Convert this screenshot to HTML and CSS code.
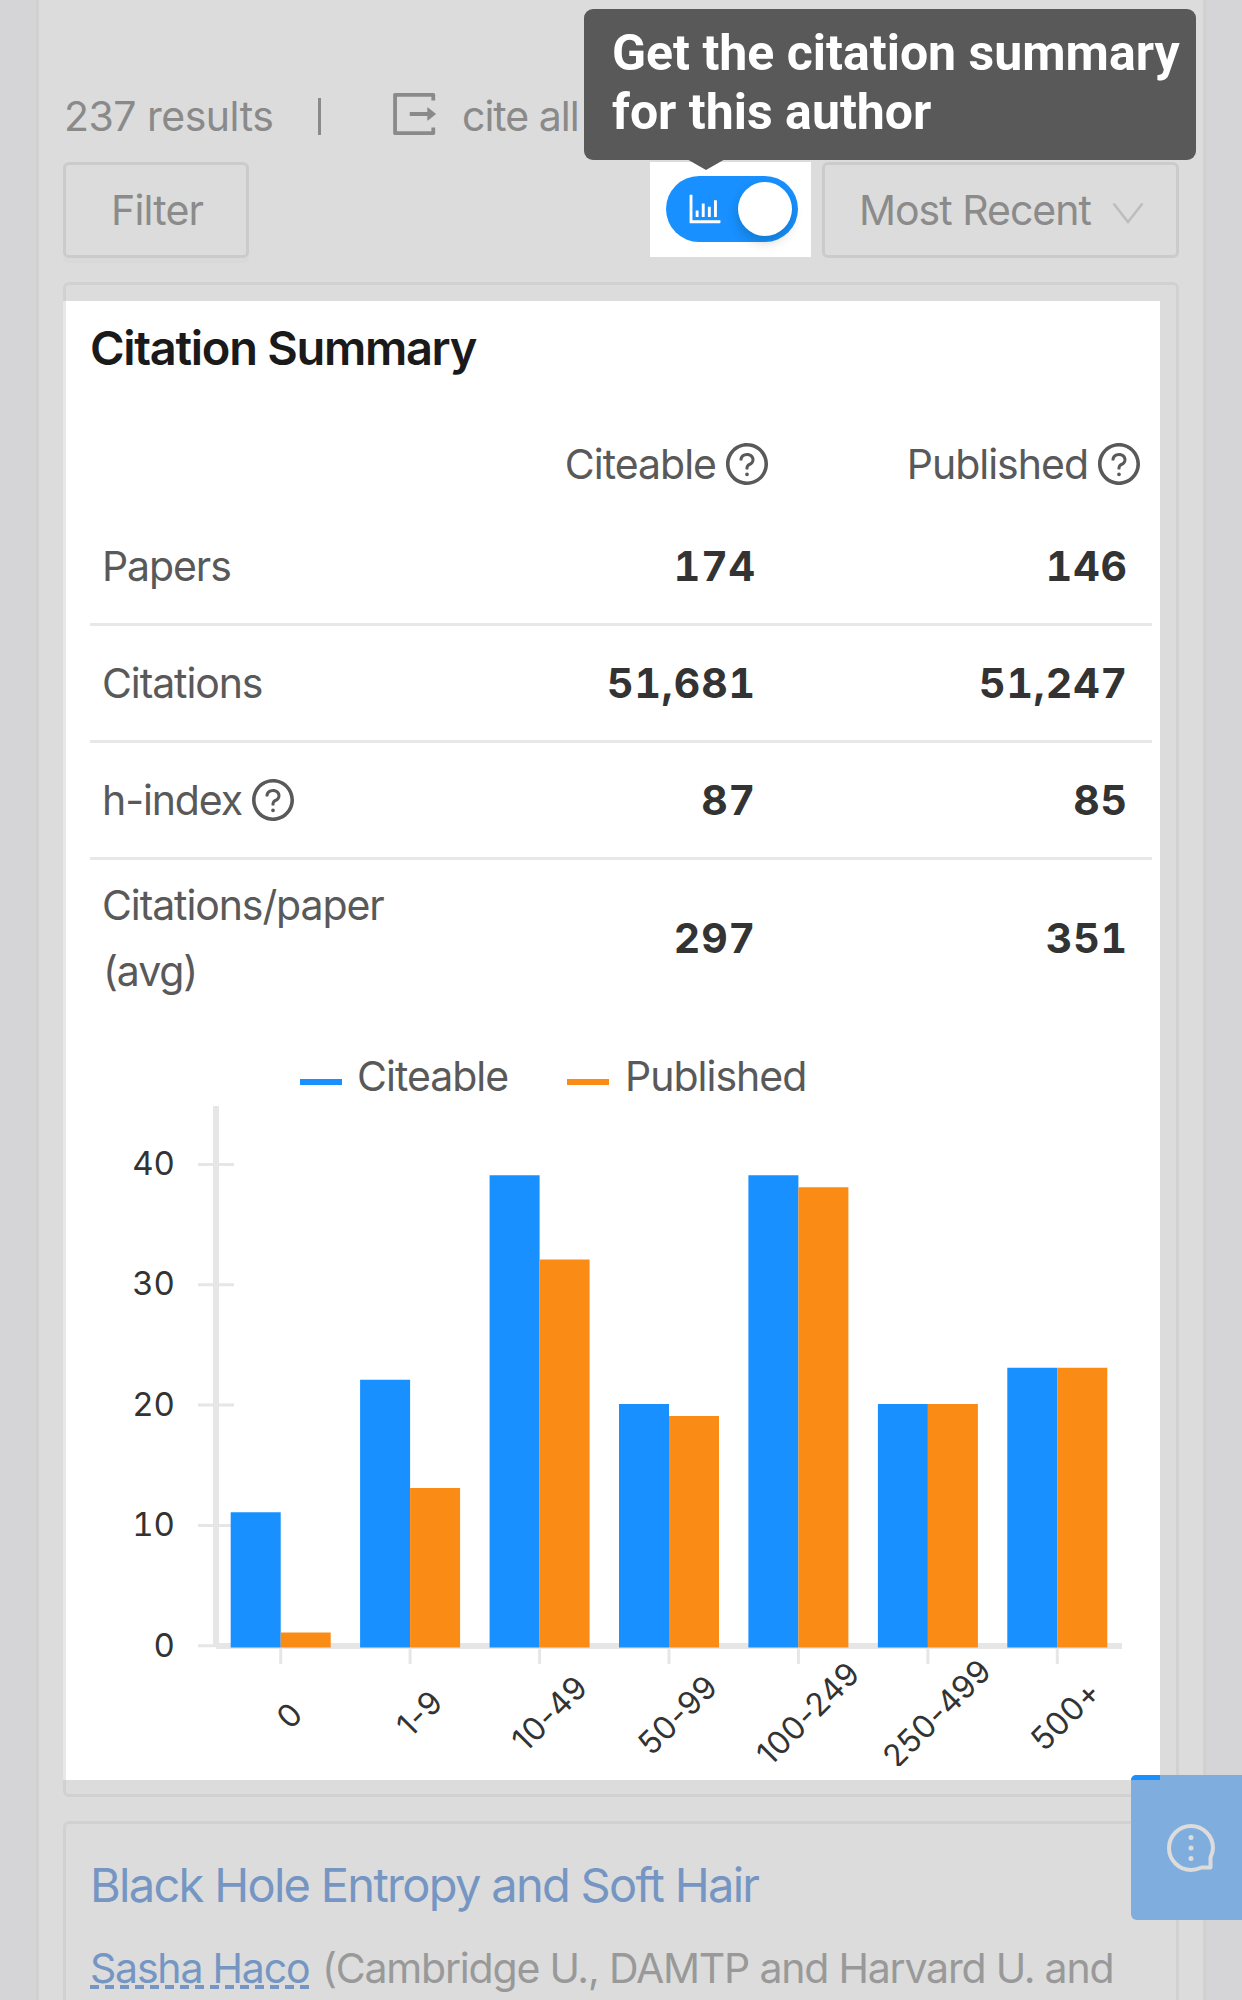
FILE: index.html
```html
<!DOCTYPE html>
<html lang="en">
<head>
<meta charset="utf-8">
<title>Citation Summary</title>
<link rel="stylesheet" href="styles.css">
</head>
<body>
<svg width="0" height="0" class="defs">
  <symbol id="help" viewBox="64 64 896 896">
    <path d="M512 64C264.6 64 64 264.6 64 512s200.6 448 448 448 448-200.6 448-448S759.4 64 512 64zm0 820c-205.4 0-372-166.6-372-372s166.6-372 372-372 372 166.6 372 372-166.6 372-372 372z"/>
    <path d="M623.6 316.7C593.6 290.4 554 276 512 276s-81.6 14.5-111.6 40.7C369.2 344 352 380.7 352 420v7.6c0 4.4 3.6 8 8 8h48c4.4 0 8-3.6 8-8V420c0-44.1 43.1-80 96-80s96 35.9 96 80c0 31.1-22 59.6-56.1 72.7-21.2 8.1-39.2 22.3-52.1 40.9-13.1 19-19.9 41.8-19.9 64.9V620c0 4.4 3.6 8 8 8h48c4.4 0 8-3.6 8-8v-22.7a48.3 48.3 0 0 1 30.9-44.8c59-22.7 97.1-74.7 97.1-132.5.1-39.3-17.1-76-48.3-103.3zM472 732a40 40 0 1 0 80 0 40 40 0 1 0-80 0z"/>
  </symbol>
</svg>
<div class="page">
  <main class="content">
    <div class="results">
      <span class="t count">237 results</span>
      <span class="bar"></span>
      <svg class="export" viewBox="128 128 780 768"><path d="M888.3 757.4h-53.8c-4.2 0-7.7 3.5-7.7 7.7v61.8H197.1V197.1h629.8v61.8c0 4.2 3.5 7.7 7.7 7.7h53.8c4.2 0 7.7-3.4 7.7-7.7V158.700c0-17-13.7-30.7-30.7-30.7H158.700c-17 0-30.7 13.7-30.7 30.7v706.6c0 17 13.7 30.7 30.7 30.7h706.6c17 0 30.7-13.7 30.7-30.7V765.1c0-4.3-3.500-7.7-7.7-7.7zm18.6-251.7L765 393.700c-5.3-4.2-13-.4-13 6.3v76H438c-4.4 0-8 3.6-8 8v56c0 4.4 3.6 8 8 8h314v76c0 6.7 7.8 10.500 13 6.3l141.900-112a8 8 0 0 0 0-12.600z"/></svg>
      <span class="t">cite all</span>
    </div>

    <div class="toolbar">
      <div class="button filter"><span class="t">Filter</span></div>
      <div class="spotlight">
        <div class="switch">
          <svg class="chart-icon" viewBox="64 64 896 896"><path d="M888 792H200V168c0-4.4-3.6-8-8-8h-56c-4.4 0-8 3.6-8 8v688c0 4.4 3.6 8 8 8h752c4.4 0 8-3.6 8-8v-56c0-4.4-3.6-8-8-8zm-600-80h56c4.4 0 8-3.6 8-8V560c0-4.4-3.6-8-8-8h-56c-4.4 0-8 3.6-8 8v144c0 4.4 3.6 8 8 8zm152 0h56c4.4 0 8-3.6 8-8V384c0-4.4-3.6-8-8-8h-56c-4.4 0-8 3.6-8 8v320c0 4.4 3.6 8 8 8zm152 0h56c4.4 0 8-3.6 8-8V462c0-4.4-3.6-8-8-8h-56c-4.4 0-8 3.6-8 8v242c0 4.4 3.6 8 8 8zm152 0h56c4.4 0 8-3.6 8-8V304c0-4.4-3.6-8-8-8h-56c-4.4 0-8 3.6-8 8v400c0 4.4 3.6 8 8 8z"/></svg>
          <span class="knob"></span>
        </div>
      </div>
      <div class="button select">
        <span class="t">Most Recent</span>
        <svg class="chevron" viewBox="0 0 32 22"><path d="M1.5 1.5 16 20 30.500 1.500"/></svg>
      </div>
    </div>

    <section class="card summary">
      <div class="panel">
        <h2>Citation Summary</h2>
        <div class="table">
          <div class="row head">
            <span></span>
            <span class="cell"><span class="t">Citeable</span><svg class="help"><use href="#help"/></svg></span>
            <span class="cell"><span class="t">Published</span><svg class="help"><use href="#help"/></svg></span>
          </div>
          <div class="row"><span class="label">Papers</span><b>174</b><b>146</b></div>
          <div class="row"><span class="label">Citations</span><b>51,681</b><b>51,247</b></div>
          <div class="row"><span class="label">h-index<svg class="help"><use href="#help"/></svg></span><b>87</b><b>85</b></div>
          <div class="row last"><span class="label long"><span>Citations/paper</span><span class="avg">(avg)</span></span><b>297</b><b>351</b></div>
        </div>
        <div class="legend">
          <span class="swatch blue"></span><span class="first">Citeable</span>
          <span class="swatch orange"></span><span>Published</span>
        </div>
        <svg class="chart" viewBox="90 1106 1062 660">
          <g class="ticks">
            <path d="M198 1164.500h36M198 1284.800h36M198 1405.100h36M198 1525.400h36M198 1645.700h18"/>
            <path d="M280.700 1648v16M410.100 1648v16M539.600 1648v16M669 1648v16M798.400 1648v16M927.900 1648v16M1057.300 1648v16"/>
          </g>
          <path class="axis" d="M216 1106v540M216 1646h906"/>
          <path class="citeable" d="M230.700 1512.200h50v135.300h-50zM360.100 1379.800h50v267.700h-50zM489.600 1175.300h50v472.200h-50zM619 1403.900h50v243.600h-50zM748.400 1175.300h50v472.200h-50zM877.900 1403.900h50v243.600h-50zM1007.300 1367.800h50v279.700h-50z"/>
          <path class="published" d="M280.700 1632.500h50v15h-50zM410.100 1488.100h50v159.400h-50zM539.600 1259.500h50v388h-50zM669 1415.900h50v231.600h-50zM798.400 1187.300h50v460.200h-50zM927.900 1403.900h50v243.600h-50zM1057.300 1367.800h50v279.700h-50z"/>
          <g class="ylab">
            <text x="175" y="1175">40</text><text x="175" y="1295">30</text><text x="175" y="1416">20</text><text x="175" y="1536">10</text><text x="175" y="1657">0</text>
          </g>
          <g class="xlab">
            <text transform="translate(289 1715) rotate(-45)" y="12">0</text>
            <text transform="translate(419 1713) rotate(-45)" y="12">1-9</text>
            <text transform="translate(549 1713) rotate(-45)" y="12">10-49</text>
            <text transform="translate(677 1714.500) rotate(-45)" y="12">50-99</text>
            <text transform="translate(807.500 1713) rotate(-45)" y="12">100-249</text>
            <text transform="translate(936.500 1713) rotate(-45)" y="12">250-499</text>
            <text transform="translate(1065 1715) rotate(-45)" y="12">500+</text>
          </g>
        </svg>
      </div>
    </section>

    <section class="card paper">
      <h3>Black Hole Entropy and Soft Hair</h3>
      <p><a>Sasha Haco</a><span>(Cambridge U., DAMTP and Harvard U. and</span></p>
    </section>
  </main>

  <div class="tooltip">Get the citation summary<br>for this author
    <svg class="arrow" viewBox="0 0 42 12"><path d="M0 0h42L21 12z"/></svg>
  </div>

  <div class="feedback">
    <span class="lit"></span>
    <svg viewBox="0 0 48 48"><path d="M24 2C11.900 2 2 11.900 2 24S11.900 46 24 46C28 46 31 45 34.500 43.500H43.500V33.500C45 30 46 27.500 46 24C46 11.900 36.100 2 24 2z"/><circle cx="24" cy="13.500" r="2.500"/><circle cx="24" cy="24" r="2.500"/><circle cx="24" cy="34.500" r="2.500"/></svg>
  </div>
</div>
</body>
</html>
```
FILE: styles.css
```css
* { box-sizing: border-box; }
body { margin: 0; font: 41px/66px Inter, "Liberation Sans", sans-serif; letter-spacing: -1px; color: #595959; }
.defs { position: absolute; }
.page { position: relative; width: 1242px; height: 2000px; overflow: hidden; background: #d5d5d7; }
.content { height: 2000px; margin: 0 36px; padding: 83px 24px 0; border: solid #d1d1d2; border-width: 0 3px; background: #dcdcdc; }
.t { white-space: nowrap; }
svg { display: block; flex: none; }

.results { display: flex; align-items: center; height: 66px; color: #8a8a8a; }
.count { width: 255px; padding-left: 1px; letter-spacing: -.5px; }
.bar { width: 3px; height: 37px; background: #8a8a8a; }
.export { width: 43px; height: 42px; margin: -4px 26px 0 72px; fill: #8a8a8a; }

.toolbar { display: flex; height: 96px; margin-top: 13px; color: #8b8b8b; }
.button { display: flex; align-items: center; border: 3px solid #cbcbcb; border-radius: 6px; box-shadow: 0 5px 0 #d9d9d9; }
.filter { width: 186px; padding-left: 45px; letter-spacing: -.8px; }
.spotlight { width: 161px; height: 95px; margin-left: auto; padding: 14px 13px 0 16px; background: #fff; }
.switch { display: flex; align-items: center; justify-content: space-between; width: 132px; height: 66px; padding: 0 6px 0 21px; border-radius: 33px; background: #1890ff; }
.chart-icon { width: 36px; height: 36px; fill: #fff; }
.knob { width: 54px; height: 54px; border-radius: 50%; background: #fff; box-shadow: 0 6px 12px rgba(0, 35, 11, .2); }
.select { width: 357px; margin-left: 11px; padding: 0 32px 0 34px; justify-content: space-between; box-shadow: none; }
.chevron { width: 32px; height: 22px; margin-top: 6px; fill: none; stroke: #bdbdbd; stroke-width: 2.5; }

.card { margin-top: 24px; border: 3px solid #d1d1d1; border-radius: 6px; }
.summary { height: 1515px; padding-top: 16px; }
.panel { width: 1097px; height: 1479px; margin-left: -3px; padding: 17px 0 0 24px; border-left: 3px solid #e8e8e8; background: #fff; }
h2 { margin: 0; font-size: 47px; font-weight: 600; line-height: 60px; letter-spacing: -1.3px; color: #1a1a1a; }
.table { width: 1062px; margin-top: 41px; }
.row { display: grid; grid-template-columns: 318px 372px 372px; align-items: center; height: 117px; border-bottom: 3px solid #e8e8e8; }
.head { height: 90px; border: 0; }
.last { height: 156px; border: 0; }
.cell { display: flex; align-items: center; justify-content: flex-end; padding-right: 12px; }
.help { width: 42px; height: 42px; margin-left: 10px; fill: #595959; }
.label { display: flex; align-items: center; padding-left: 12px; letter-spacing: -1.1px; }
.long { flex-direction: column; align-items: flex-start; }
.avg { padding-left: 1px; }
b { padding-right: 24px; text-align: right; font-weight: 700; letter-spacing: .9px; font-variant-numeric: tabular-nums; color: #333; }

.legend { display: flex; align-items: center; height: 60px; margin-top: 30px; padding-left: 210px; }
.swatch { width: 42px; height: 6px; margin: 12px 15px 0 0; }
.blue { background: #1890ff; }
.orange { margin-right: 16px; background: #fa8c16; }
.first { width: 210px; }
.chart { width: 1062px; height: 660px; overflow: hidden; }
.ticks { fill: none; stroke: #e6e6e7; stroke-width: 3; }
.axis { fill: none; stroke: #e6e6e7; stroke-width: 6; }
.citeable { fill: #1890ff; }
.published { fill: #fa8c16; }
.ylab { font-size: 33px; letter-spacing: 0; font-variant-numeric: tabular-nums; fill: #333; text-anchor: end; }
.xlab { font-size: 32px; letter-spacing: .4px; fill: #333; text-anchor: middle; }

.paper { height: 300px; padding: 31px 24px 0; white-space: nowrap; }
h3 { margin: 0; font-size: 47px; font-weight: 400; line-height: 60px; letter-spacing: -1.7px; color: #7596c3; }
p { display: flex; margin: 20px 0 0; letter-spacing: -1.2px; color: #999; }
p a { width: 219px; margin-right: 13px; color: #7596c3; background: repeating-linear-gradient(90deg, #7596c3 0 9px, transparent 9px 15px) 0 50px / 100% 4px no-repeat; }

.tooltip { position: absolute; left: 584px; top: 9px; width: 612px; height: 151px; padding: 15px 0 0 28px; border-radius: 9px; background: #595959; color: #fff; font: 700 50px/59px Roboto, sans-serif; letter-spacing: 0; white-space: nowrap; }
.arrow { position: absolute; left: 101px; top: 149px; width: 42px; height: 12px; fill: #595959; }

.feedback { position: absolute; left: 1131px; top: 1775px; width: 111px; height: 145px; padding: 49px 0 0 36px; border-radius: 6px 0 0 6px; background: #7fadde; }
.feedback svg { width: 48px; height: 48px; fill: none; stroke: #dcdcdc; stroke-width: 4; stroke-linejoin: round; }
.feedback circle { fill: #dcdcdc; stroke: none; }
.lit { position: absolute; left: 0; top: 0; width: 29px; height: 5px; border-top-left-radius: 6px; background: #1890ff; }
```
